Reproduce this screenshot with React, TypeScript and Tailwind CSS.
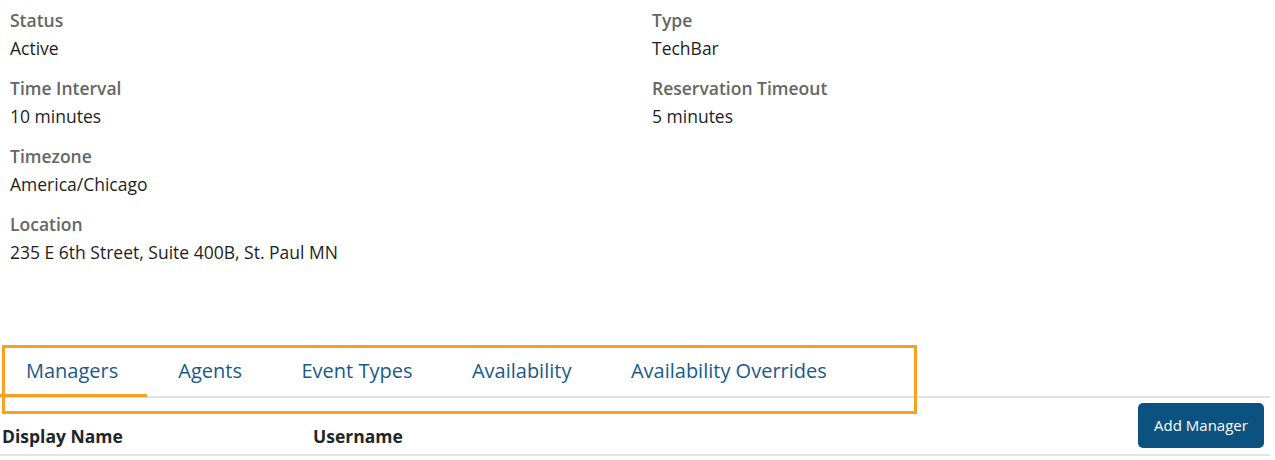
import React from 'react';

type Field = { label: string; value: string };

const LEFT: Field[] = [
  { label: 'Status', value: 'Active' },
  { label: 'Time Interval', value: '10 minutes' },
  { label: 'Timezone', value: 'America/Chicago' },
  { label: 'Location', value: '235 E 6th Street, Suite 400B, St. Paul MN' },
];

const RIGHT: Field[] = [
  { label: 'Type', value: 'TechBar' },
  { label: 'Reservation Timeout', value: '5 minutes' },
];

const TABS = ['Managers', 'Agents', 'Event Types', 'Availability', 'Availability Overrides'];

function FieldBlock({ label, value }: Field) {
  return (
    <div className="mb-[12px]">
      <div className="text-[17.5px] leading-[28px] font-semibold text-[#666666]">{label}</div>
      <div className="text-[17.5px] leading-[28px] text-[#1e1e1e]">{value}</div>
    </div>
  );
}

export default function App() {
  return (
    <div className="w-[1270px] bg-white font-['Open_Sans',sans-serif]">
      {/* Details */}
      <div className="grid grid-cols-[642px_1fr] pl-[10px] pt-[6px]">
        <div>
          {LEFT.map((f) => (
            <FieldBlock key={f.label} {...f} />
          ))}
        </div>
        <div>
          {RIGHT.map((f) => (
            <FieldBlock key={f.label} {...f} />
          ))}
        </div>
      </div>

      {/* Tabs */}
      <div className="relative mt-[68px]">
        <div className="flex border-b-2 border-[#dee2e6]">
          {TABS.map((t, i) => (
            <div
              key={t}
              className={
                i === 0
                  ? 'pl-[26px] pr-[29px] pt-[10px] pb-[8px] -mb-[1px] text-[20px] leading-[30px] text-[#1a5a8a] border-b-[3px] border-[#f7a021]'
                  : 'pl-[31px] pr-[28.5px] pt-[10px] pb-[8px] -mb-[1px] text-[20px] leading-[30px] text-[#1a5a8a] border-b-[3px] border-transparent'
              }
            >
              {t}
            </div>
          ))}
        </div>
        <div className="absolute -top-[1px] left-[2px] w-[915px] h-[69px] border-[3px] border-[#f7a021] pointer-events-none" />
      </div>

      {/* Table header */}
      <div className="flex justify-between items-start border-b-2 border-[#e2e4e7]">
        <div className="flex pt-[26px] pb-[6px] text-[17.5px] leading-[24px] font-bold text-[#212529]">
          <div className="w-[313px] pl-[2px]">Display Name</div>
          <div>Username</div>
        </div>
        <button className="mt-[5px] mr-[6px] h-[45px] w-[126px] rounded-[5px] bg-[#0b5280] text-white text-[15px]">
          Add Manager
        </button>
      </div>
    </div>
  );
}
